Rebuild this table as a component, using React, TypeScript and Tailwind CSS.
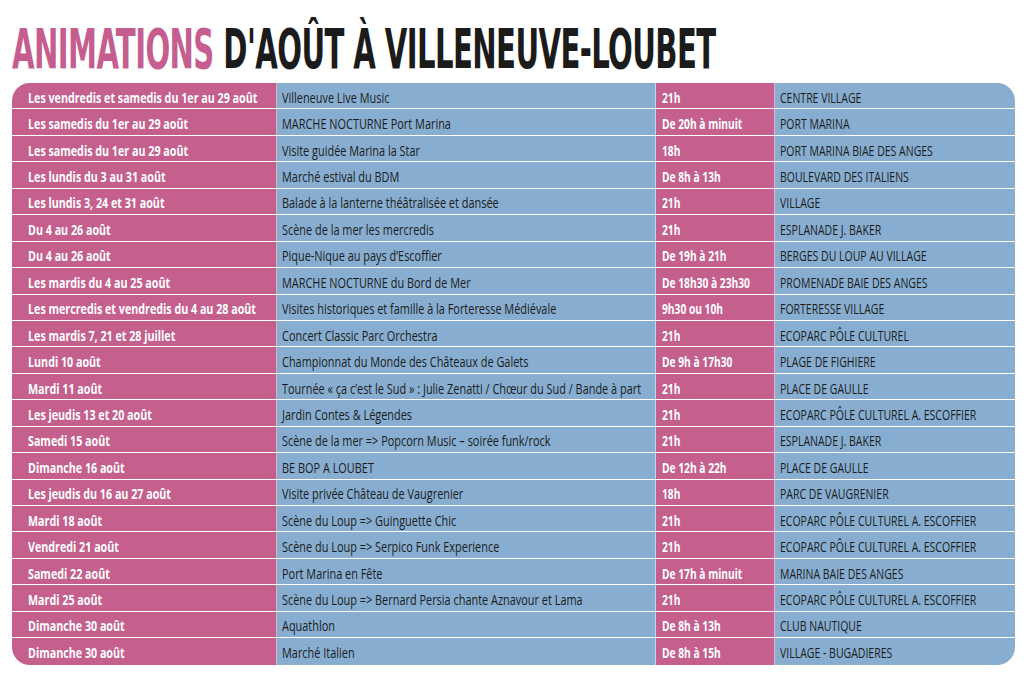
import React from "react";

type Row = [string, string, string, string];

const rows: Row[] = [
  ["Les vendredis et samedis du 1er au 29 août", "Villeneuve Live Music", "21h", "CENTRE VILLAGE"],
  ["Les samedis du 1er au 29 août", "MARCHE NOCTURNE Port Marina", "De 20h à minuit", "PORT MARINA"],
  ["Les samedis du 1er au 29 août", "Visite guidée Marina la Star", "18h", "PORT MARINA BIAE DES ANGES"],
  ["Les lundis du 3 au 31 août", "Marché estival du BDM", "De 8h à 13h", "BOULEVARD DES ITALIENS"],
  ["Les lundis 3, 24 et 31 août", "Balade à la lanterne théâtralisée et dansée", "21h", "VILLAGE"],
  ["Du 4 au 26 août", "Scène de la mer les mercredis", "21h", "ESPLANADE J. BAKER"],
  ["Du 4 au 26 août", "Pique-Nique au pays d’Escoffier", "De 19h à 21h", "BERGES DU LOUP AU VILLAGE"],
  ["Les mardis du 4 au 25 août", "MARCHE NOCTURNE du Bord de Mer", "De 18h30 à 23h30", "PROMENADE BAIE DES ANGES"],
  ["Les mercredis et vendredis du 4 au 28 août", "Visites historiques et famille à la Forteresse Médiévale", "9h30 ou 10h", "FORTERESSE VILLAGE"],
  ["Les mardis 7, 21 et 28 juillet", "Concert Classic Parc Orchestra", "21h", "ECOPARC PÔLE CULTUREL"],
  ["Lundi 10 août", "Championnat du Monde des Châteaux de Galets", "De 9h à 17h30", "PLAGE DE FIGHIERE"],
  ["Mardi 11 août", "Tournée « ça c’est le Sud » : Julie Zenatti / Chœur du Sud / Bande à part", "21h", "PLACE DE GAULLE"],
  ["Les jeudis 13 et 20 août", "Jardin Contes & Légendes", "21h", "ECOPARC PÔLE CULTUREL A. ESCOFFIER"],
  ["Samedi 15 août", "Scène de la mer => Popcorn Music – soirée funk/rock", "21h", "ESPLANADE J. BAKER"],
  ["Dimanche 16 août", "BE BOP A LOUBET", "De 12h à 22h", "PLACE DE GAULLE"],
  ["Les jeudis du 16 au 27 août", "Visite privée Château de Vaugrenier", "18h", "PARC DE VAUGRENIER"],
  ["Mardi 18 août", "Scène du Loup => Guinguette Chic", "21h", "ECOPARC PÔLE CULTUREL A. ESCOFFIER"],
  ["Vendredi 21 août", "Scène du Loup => Serpico Funk Experience", "21h", "ECOPARC PÔLE CULTUREL A. ESCOFFIER"],
  ["Samedi 22 août", "Port Marina en Fête", "De 17h à minuit", "MARINA BAIE DES ANGES"],
  ["Mardi 25 août", "Scène du Loup => Bernard Persia chante Aznavour et Lama", "21h", "ECOPARC PÔLE CULTUREL A. ESCOFFIER"],
  ["Dimanche 30 août", "Aquathlon", "De 8h à 13h", "CLUB NAUTIQUE"],
  ["Dimanche 30 août", "Marché Italien", "De 8h à 15h", "VILLAGE - BUGADIERES"],
];

export default function App() {
  return (
    <div className="h-[682px] w-[1024px] overflow-hidden bg-white">
      <h1 className="h-[83px] pl-[12px] pt-[21px] leading-none">
        <span className="inline-block origin-left scale-x-[0.578] whitespace-nowrap text-[56px] font-bold tracking-[-1px] text-[#1b1b1b] [font-family:'DejaVu_Sans_Condensed','DejaVu_Sans',sans-serif]">
          <span className="text-[#c55e8f]">ANIMATIONS</span> D'AOÛT À VILLENEUVE-LOUBET
        </span>
      </h1>

      <div className="ml-[12px] w-[1003px] overflow-hidden rounded-[18px] text-[14px] [font-family:'Open_Sans',sans-serif]">
        {rows.map(([date, title, time, place], i) => (
          <div
            key={i}
            className={`grid h-[26.45px] grid-cols-[265px_379px_119px_1fr] ${
              i < rows.length - 1 ? "border-b border-white/40" : ""
            }`}
          >
            <div className="flex items-center overflow-hidden whitespace-nowrap border-r border-white/50 bg-[#c45f8e] pl-[16px] pt-[3px] font-bold text-white">
              <span className="inline-block origin-left scale-x-[0.765]">{date}</span>
            </div>
            <div className="flex items-center overflow-hidden whitespace-nowrap border-r border-white/50 bg-[#87aed0] pl-[5px] pt-[3px] text-[#1c1c1c]">
              <span className="inline-block origin-left scale-x-[0.78]">{title}</span>
            </div>
            <div className="flex items-center overflow-hidden whitespace-nowrap border-r border-white/50 bg-[#c45f8e] pl-[6px] pt-[3px] font-bold text-white">
              <span className="inline-block origin-left scale-x-[0.73]">{time}</span>
            </div>
            <div className="flex items-center overflow-hidden whitespace-nowrap bg-[#87aed0] pl-[5px] pt-[3px] text-[#1c1c1c]">
              <span className="inline-block origin-left scale-x-[0.75]">{place}</span>
            </div>
          </div>
        ))}
      </div>
    </div>
  );
}
